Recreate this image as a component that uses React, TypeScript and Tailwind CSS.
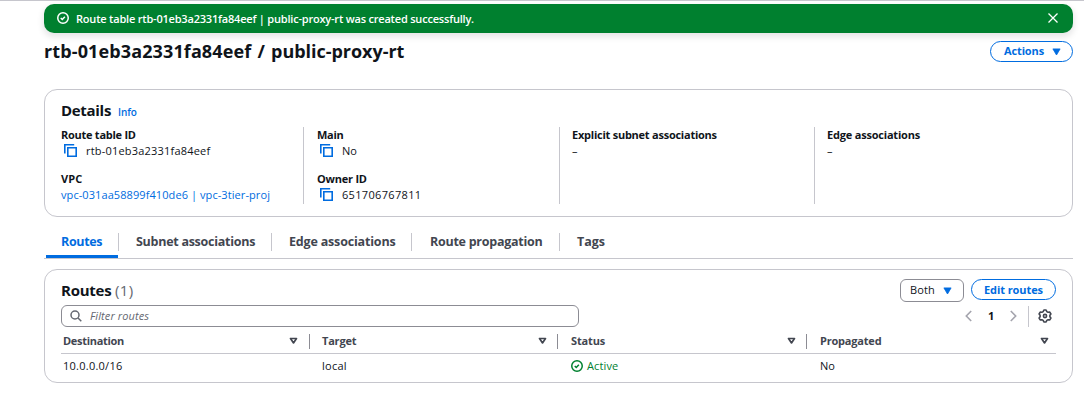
import type { ReactNode } from 'react';

type P = { className?: string };

const CheckCircle = ({ className = '' }: P) => (
  <svg viewBox="0 0 16 16" className={`shrink-0 ${className}`} fill="none" stroke="currentColor" strokeWidth="2">
    <circle cx="8" cy="8" r="7" />
    <path d="m5 8 2 2 3.5-3.8" />
  </svg>
);

const Copy = () => (
  <svg viewBox="0 0 13 13" className="-mt-px mr-[9px] ml-[3px] h-[13px] w-[13px] shrink-0" fill="none" stroke="#006ce0" strokeWidth="1.6">
    <path d="M.8 9.5V.8h9.4" />
    <path d="M3.8 3.8h8.4v8.4H3.8z" />
  </svg>
);

const Caret = ({ className = '' }: P) => (
  <svg viewBox="0 0 9 8" className={`h-2 w-[9px] shrink-0 ${className}`} fill="#006ce0">
    <path d="M.9.9h7.2L4.5 7z" stroke="#006ce0" strokeWidth=".8" strokeLinejoin="round" />
  </svg>
);

const Sort = () => (
  <svg viewBox="0 0 9 8" className="h-2 w-[9px] shrink-0" fill="none" stroke="#424650" strokeWidth="1.7" strokeLinejoin="round">
    <path d="M1.5 1.5h6l-3 4.4z" />
  </svg>
);

const Chevron = ({ className = '' }: P) => (
  <svg viewBox="0 0 7 12" className={`h-3 w-[7px] shrink-0 ${className}`} fill="none" stroke="#a4a4ad" strokeWidth="1.6">
    <path d="M6.2 1 1.3 6l4.9 5" />
  </svg>
);

const Gear = () => (
  <svg viewBox="0 0 14 14" className="h-[14px] w-[14px] shrink-0" fill="none" stroke="#424650" strokeWidth="1.6" strokeLinejoin="round">
    <path d="M5.2 2.6 5.9 1h2.2l.7 1.6 1.3.7 1.7-.2 1.1 1.9-1 1.3v1.4l1 1.3-1.1 1.9-1.7-.2-1.3.7-.7 1.6H5.9l-.7-1.6-1.3-.7-1.7.2L1.1 9l1-1.3V6.3L1.1 5l1.1-1.9 1.7.2z" />
    <circle cx="7" cy="7" r="1.6" />
  </svg>
);

const Field = ({ label, labelClass, children }: { label: string; labelClass: string; children: ReactNode }) => (
  <div className="h-11">
    <div className={`h-4 leading-4 font-bold whitespace-nowrap ${labelClass}`}>{label}</div>
    <div className="flex h-4 items-center whitespace-nowrap">{children}</div>
  </div>
);

const tabs = [
  { label: 'Subnet associations', style: 'w-[153px] pl-[17px] tracking-[-0.27px]' },
  { label: 'Edge associations', style: 'w-[140px] pl-[17px] tracking-[-0.18px]' },
  { label: 'Route propagation', style: 'w-[148px] pl-[18px] tracking-[-0.26px]' },
  { label: 'Tags', style: 'w-[60px] pl-[17px]' },
];

const columns = [
  { label: 'Destination', style: 'w-[249px] pl-[2px] pr-[11px] tracking-[-0.3px]', divider: true },
  { label: 'Target', style: 'w-[248px] pl-3 pr-[10px] tracking-[-0.2px]', divider: true },
  { label: 'Status', style: 'w-[249px] pl-[13px] pr-[10px] tracking-[-0.15px]', divider: true },
  { label: 'Propagated', style: 'w-[249px] pl-[13px] pr-[7px] tracking-[-0.2px]', divider: false },
];

export default function App() {
  return (
    <div className="h-[403px] w-[1084px] overflow-hidden border-t border-[#c6c6cd] bg-white pt-[3px] pl-11 font-['Open_Sans','Noto_Sans',sans-serif] text-[11px] text-[#0f141a]">
      <div className="w-[1029px]">
        <div className="flex h-[29px] items-center rounded-[10px] bg-[#00802f] pr-[15px] pl-[13px] text-white shadow-[0_3px_6px_1px_rgba(0,7,22,0.1)]">
          <CheckCircle className="-mt-px h-3 w-3" />
          <span className="ml-[7px] pt-px font-semibold tracking-[-0.2px] whitespace-nowrap">
            Route table rtb-01eb3a2331fa84eef | public-proxy-rt was created successfully.
          </span>
          <svg viewBox="0 0 10 10" className="-mt-px ml-auto h-[10px] w-[10px]" stroke="currentColor" strokeWidth="1.3">
            <path d="m.5.5 9 9m0-9-9 9" />
          </svg>
        </div>

        <div className="flex h-14 items-start justify-between">
          <h1 className="mt-1.5 text-[18px] leading-6 font-bold tracking-[0.05px] [word-spacing:1.4px] whitespace-nowrap"><span className="tracking-[0.12px]">rtb-01eb3a2331fa84eef</span> / <span className="tracking-[-0.03px]">public-proxy-rt</span></h1>
          <button className="mt-2 flex h-[21px] w-[83px] items-center rounded-full border-[1.5px] border-[#006ce0] pl-[13px] font-bold tracking-[-0.13px] text-[#006ce0]">
            Actions
            <Caret className="ml-[8px]" />
          </button>
        </div>

        <section className="h-32 rounded-[13px] border border-[#c6c6cd] pt-[10px] pl-4">
          <div className="flex h-5 items-baseline">
            <h2 className="text-[15px] leading-5 font-bold tracking-[-0.3px]">Details</h2>
            <a className="ml-[7px] text-[10px] font-semibold tracking-[-0.1px] text-[#006ce0]">Info</a>
          </div>
          <div className="mt-[7px] flex h-[77px]">
            <div className="w-[243px] border-r border-[#c6c6cd]">
              <Field label="Route table ID" labelClass="tracking-[-0.26px]">
                <Copy /><span className="tracking-[0.2px]">rtb-01eb3a2331fa84eef</span>
              </Field>
              <Field label="VPC" labelClass="tracking-[0.1px]">
                <a className="tracking-[0.08px] text-[#006ce0]">vpc-031aa58899f410de6 | vpc-3tier-proj</a>
              </Field>
            </div>
            <div className="w-64 border-r border-[#c6c6cd] pl-[13px]">
              <Field label="Main" labelClass="tracking-[-0.25px]"><Copy />No</Field>
              <Field label="Owner ID" labelClass="tracking-[-0.22px]">
                <Copy /><span className="tracking-[0.33px]">651706767811</span>
              </Field>
            </div>
            <div className="w-[255px] border-r border-[#c6c6cd] pl-[12px]">
              <Field label="Explicit subnet associations" labelClass="tracking-[-0.24px]">–</Field>
            </div>
            <div className="pl-[12px]">
              <Field label="Edge associations" labelClass="tracking-[-0.2px]">–</Field>
            </div>
          </div>
        </section>

        <nav className="flex h-[42px] items-end border-b border-[#c6c6cd] text-[12.5px] font-bold text-[#424650]">
          <div className="ml-0.5 flex h-[25px] w-[72px] border-b-[3px] border-[#006ce0] pl-[15px] leading-[18px] tracking-[-0.35px] text-[#006ce0]">Routes</div>
          {tabs.map((t) => (
            <div key={t.label} className="flex h-[25px] items-start">
              <div className={`h-[18px] border-l border-[#c6c6cd] leading-[18px] whitespace-nowrap ${t.style}`}>{t.label}</div>
            </div>
          ))}
        </nav>

        <section className="mt-[10px] h-[114px] rounded-[13px] border border-[#c6c6cd] pr-4 pl-4">
          <div className="flex h-[35px] items-start pt-[9px]">
            <h2 className="mt-px text-[15px] leading-5 font-bold tracking-[-0.25px]">
              Routes <span className="font-normal tracking-[0.3px] text-[#656871]">(1)</span>
            </h2>
            <button className="ml-auto flex h-[23px] w-16 items-center rounded-md border border-[#8c8c94] pl-[9px] tracking-[0.1px]">
              Both
              <Caret className="ml-[8px]" />
            </button>
            <button className="ml-[7px] flex h-[21px] w-[85px] items-center justify-center rounded-full border-[1.5px] border-[#006ce0] pt-px font-bold tracking-[-0.08px] text-[#006ce0]">Edit routes</button>
          </div>
          <div className="flex h-[22px] items-center">
            <div className="flex h-[22px] w-[518px] items-center rounded-md border border-[#8c8c94] pl-[8px] text-[#656871]">
              <svg viewBox="0 0 12 12" className="h-3 w-3" fill="none" stroke="#656871" strokeWidth="1.5">
                <circle cx="5" cy="5" r="4" />
                <path d="m8 8 3.3 3.3" />
              </svg>
              <span className="ml-2 tracking-[0.1px] italic">Filter routes</span>
            </div>
            <Chevron className="ml-[386px]" />
            <span className="ml-4 pt-px font-bold">1</span>
            <Chevron className="ml-4 rotate-180" />
            <div className="ml-[11px] h-[21px] border-l border-[#c6c6cd]" />
            <div className="ml-[9px]"><Gear /></div>
          </div>
          <div className="flex h-[27px] items-center border-b border-[#c6c6cd] pt-[2px] font-bold text-[#424650]">
            {columns.map((c) => (
              <div key={c.label} className={`flex h-[15px] shrink-0 items-center justify-between ${c.divider ? 'border-r border-[#8c8c94]' : ''} ${c.style}`}>
                {c.label}
                <Sort />
              </div>
            ))}
          </div>
          <div className="flex h-[25px] items-center">
            <div className="w-[261px] pl-[2px] tracking-[0.25px]">10.0.0.0/16</div>
            <div className="w-[249px] tracking-[0.25px]">local</div>
            <div className="flex w-[249px] items-center tracking-[0.12px] text-[#00802f]">
              <CheckCircle className="-mt-0.5 mr-1 h-3 w-3" />
              Active
            </div>
            <div>No</div>
          </div>
        </section>
      </div>
    </div>
  );
}
